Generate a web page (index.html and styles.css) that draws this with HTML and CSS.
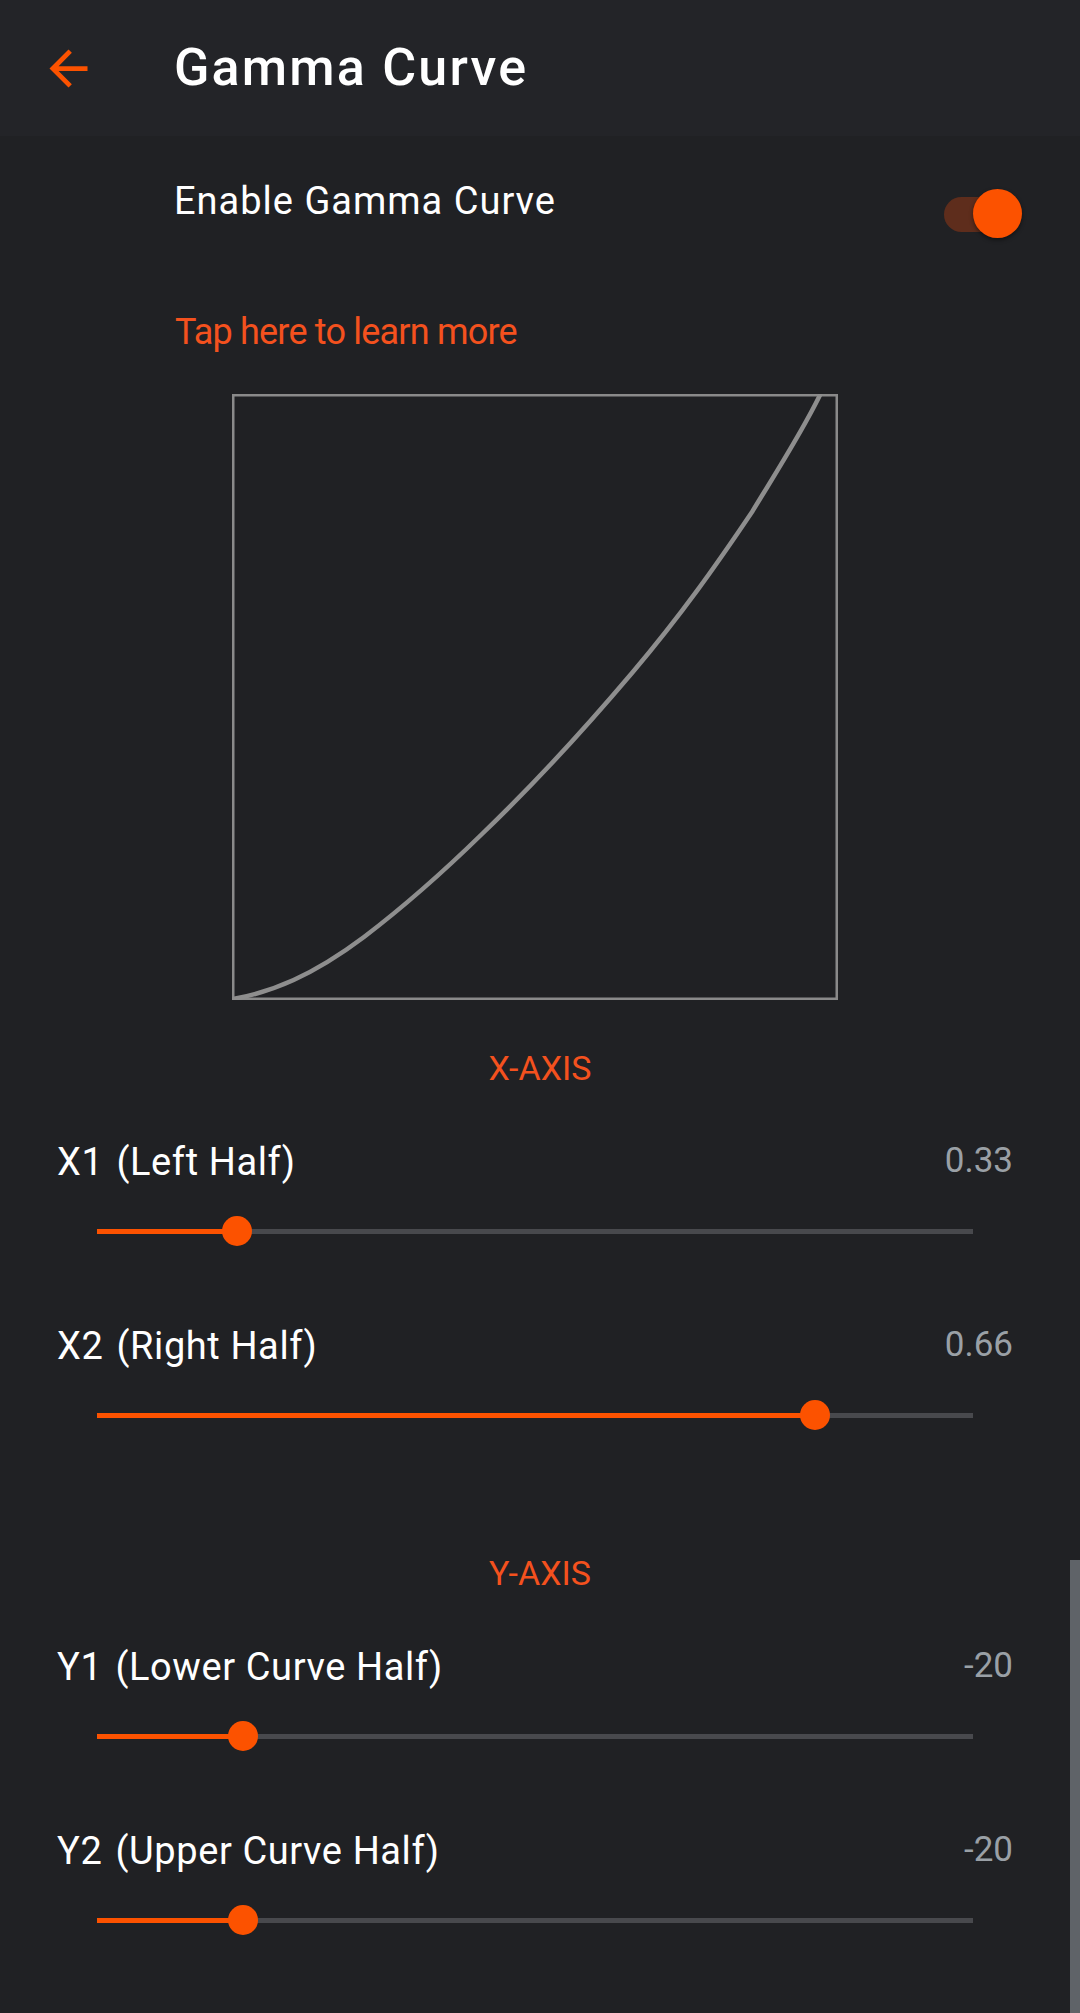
FILE: index.html
```html
<!DOCTYPE html>
<html lang="en">
<head>
<meta charset="utf-8">
<title>Gamma Curve</title>
<link rel="stylesheet" href="styles.css">
</head>
<body>
<div class="page">
  <header class="appbar">
    <svg class="back" viewBox="0 0 24 24" width="57" height="57" aria-hidden="true"><path d="M20 11H7.83l5.59-5.59L12 4l-8 8 8 8 1.41-1.41L7.83 13H20v-2z"/></svg>
    <h1 class="title">Gamma Curve</h1>
  </header>

  <main class="content">
    <div class="enable-row">
      <span class="enable-label">Enable Gamma Curve</span>
      <div class="switch">
        <span class="switch-track"></span>
        <span class="switch-thumb"></span>
      </div>
    </div>

    <a class="learn">Tap here to learn more</a>

    <svg class="graph" viewBox="0 0 606 606" width="606" height="606">
      <rect x="1.25" y="1.25" width="603.5" height="603.5" fill="none" stroke="#8a8a8a" stroke-width="2.5"/>
      <path d="M1 605 C 40 598, 80 582, 132 543 C 170 514, 205 484, 250 440 C 300 392, 350 338, 400 279 C 450 220, 485 170, 520 118 C 548 72, 570 38, 588 1" fill="none" stroke="#8e8e8e" stroke-width="4.5" stroke-linecap="round"/>
    </svg>

    <h2 class="axis">X-AXIS</h2>

    <section class="slider-block">
      <div class="slider-head"><span class="slider-label"><span class="code">X1</span> (Left Half)</span><span class="slider-value">0.33</span></div>
      <div class="slider"><span class="track"></span><span class="active" style="width:16%"></span><span class="thumb" style="left:16%"></span></div>
    </section>
    <section class="slider-block">
      <div class="slider-head"><span class="slider-label"><span class="code">X2</span> (Right Half)</span><span class="slider-value">0.66</span></div>
      <div class="slider"><span class="track"></span><span class="active" style="width:82%"></span><span class="thumb" style="left:82%"></span></div>
    </section>

    <h2 class="axis axis-y">Y-AXIS</h2>

    <section class="slider-block">
      <div class="slider-head"><span class="slider-label"><span class="code">Y1</span> (Lower Curve Half)</span><span class="slider-value">-20</span></div>
      <div class="slider"><span class="track"></span><span class="active" style="width:16.7%"></span><span class="thumb" style="left:16.7%"></span></div>
    </section>
    <section class="slider-block">
      <div class="slider-head"><span class="slider-label"><span class="code">Y2</span> (Upper Curve Half)</span><span class="slider-value">-20</span></div>
      <div class="slider"><span class="track"></span><span class="active" style="width:16.7%"></span><span class="thumb" style="left:16.7%"></span></div>
    </section>
  </main>
  <div class="scrollbar"></div>
</div>
</body>
</html>
```

FILE: styles.css
```css
* { box-sizing: border-box; }
html, body { margin: 0; padding: 0; }
body {
  background: #202124;
  font-family: Roboto, "Open Sans", sans-serif;
  color: #ffffff;
}
.page {
  position: relative;
  width: 1080px;
  height: 2013px;
  overflow: hidden;
  background: #202124;
}
.appbar {
  height: 136px;
  background: #232428;
  display: flex;
  align-items: center;
}
.back {
  fill: #fc5200;
  margin-left: 40px;
  flex: none;
}
.title {
  margin: 0 0 0 77px;
  font-size: 52px;
  line-height: 52px;
  font-weight: 500;
  letter-spacing: 2.2px;
  color: #ffffff;
}
.content {
  display: flex;
  flex-direction: column;
}
.enable-row {
  display: flex;
  align-items: flex-start;
  justify-content: space-between;
  margin-top: 46px;
  padding-left: 174px;
  padding-right: 58px;
}
.enable-label {
  font-size: 38px;
  line-height: 38px;
  letter-spacing: 1px;
  color: #ffffff;
}
.switch {
  position: relative;
  width: 78px;
  height: 49px;
  margin-top: 7px;
}
.switch-track {
  position: absolute;
  left: 0;
  top: 8px;
  width: 70px;
  height: 35px;
  border-radius: 18px;
  background: #5e2d1c;
}
.switch-thumb {
  position: absolute;
  right: 0;
  top: 0;
  width: 49px;
  height: 49px;
  border-radius: 50%;
  background: #fc5200;
  box-shadow: 0 2px 4px rgba(0,0,0,0.45);
}
.learn {
  margin-top: 76px;
  margin-left: 175px;
  font-size: 36px;
  line-height: 36px;
  font-weight: 400;
  letter-spacing: -0.8px;
  color: #f4511e;
}
.graph {
  display: block;
  margin-top: 44px;
  margin-left: 232px;
}
.axis {
  margin: 51px 0 0 0;
  text-align: center;
  font-size: 34px;
  line-height: 34px;
  font-weight: 400;
  color: #f4511e;
}
.axis-y {
  margin-top: 126px;
}
.slider-block {
  margin-top: 58px;
  padding: 0 67px 0 57px;
}
.slider-block + .slider-block {
  margin-top: 81px;
}
.slider-head {
  display: flex;
  justify-content: space-between;
  align-items: flex-start;
}
.slider-label {
  font-size: 38px;
  line-height: 38px;
  letter-spacing: 0.6px;
  color: #ffffff;
}
.code {
  margin-right: 3px;
}
.slider-value {
  font-size: 35px;
  line-height: 35px;
  color: #9aa0a6;
}
.slider {
  position: relative;
  height: 30px;
  margin: 35px 40px 0 40px;
}
.track {
  position: absolute;
  left: 0;
  right: 0;
  top: 12.5px;
  height: 5px;
  background: #48494d;
}
.active {
  position: absolute;
  left: 0;
  top: 12.5px;
  height: 5px;
  background: #fc5200;
}
.thumb {
  position: absolute;
  top: 0;
  width: 30px;
  height: 30px;
  margin-left: -15px;
  border-radius: 50%;
  background: #fc5200;
}
.scrollbar {
  position: absolute;
  right: 0;
  top: 1560px;
  width: 10px;
  height: 453px;
  background: #5f6368;
}
```
